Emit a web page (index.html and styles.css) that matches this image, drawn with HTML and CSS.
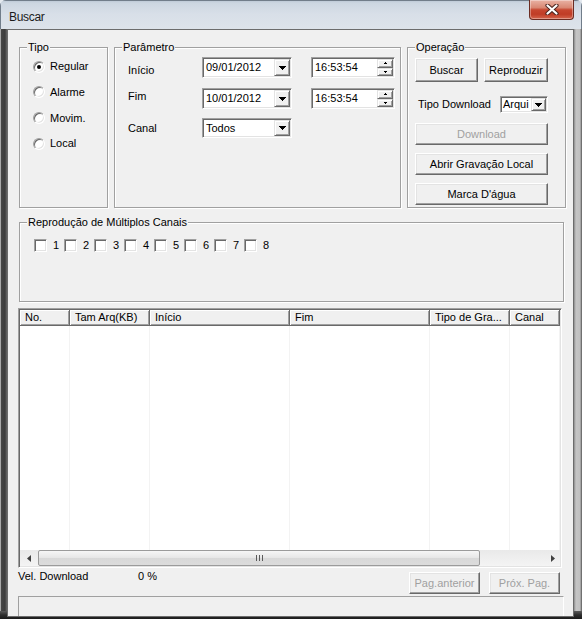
FILE: index.html
```html
<!DOCTYPE html>
<html lang="pt">
<head>
<meta charset="utf-8">
<title>Buscar</title>
<link rel="stylesheet" href="styles.css">
</head>
<body>
<div class="window">
  <div class="titlebar">
    <span class="title">Buscar</span>
    <div class="close">
      <svg width="14" height="11" viewBox="0 0 14 11"><path d="M2.5 1.5L11.5 9.5M11.5 1.5L2.5 9.5" stroke="#4d2620" stroke-width="4.2" stroke-linecap="round"/><path d="M2.5 1.5L11.5 9.5M11.5 1.5L2.5 9.5" stroke="#fff" stroke-width="2.2" stroke-linecap="round"/></svg>
    </div>
  </div>
  <div class="mid">
    <div class="client">
      <div class="top-row">
        <div class="group g-tipo">
          <span class="legend">Tipo</span>
          <div class="radio-row"><span class="radio checked"></span><span>Regular</span></div>
          <div class="radio-row"><span class="radio"></span><span>Alarme</span></div>
          <div class="radio-row"><span class="radio"></span><span>Movim.</span></div>
          <div class="radio-row"><span class="radio"></span><span>Local</span></div>
        </div>
        <div class="group g-param">
          <span class="legend">Parâmetro</span>
          <div class="prow r1">
            <span class="plabel l1">Início</span>
            <div class="combo date"><span class="val">09/01/2012</span><span class="dd"><svg width="7" height="4"><path d="M0 0h7v1h-1v1h-1v1h-1v1h-1v-1h-1v-1h-1v-1h-1z"/></svg></span></div>
            <div class="time"><span class="val">16:53:54</span><span class="spin"><span class="sb"><svg width="3" height="2"><path d="M1 0h1v1h1v1h-3v-1h1z"/></svg></span><span class="sb"><svg width="3" height="2"><path d="M0 0h3v1h-1v1h-1v-1h-1z"/></svg></span></span></div>
          </div>
          <div class="prow r2">
            <span class="plabel l2">Fim</span>
            <div class="combo date"><span class="val">10/01/2012</span><span class="dd"><svg width="7" height="4"><path d="M0 0h7v1h-1v1h-1v1h-1v1h-1v-1h-1v-1h-1v-1h-1z"/></svg></span></div>
            <div class="time"><span class="val">16:53:54</span><span class="spin"><span class="sb"><svg width="3" height="2"><path d="M1 0h1v1h1v1h-3v-1h1z"/></svg></span><span class="sb"><svg width="3" height="2"><path d="M0 0h3v1h-1v1h-1v-1h-1z"/></svg></span></span></div>
          </div>
          <div class="prow r3">
            <span class="plabel">Canal</span>
            <div class="combo date"><span class="val">Todos</span><span class="dd"><svg width="7" height="4"><path d="M0 0h7v1h-1v1h-1v1h-1v1h-1v-1h-1v-1h-1v-1h-1z"/></svg></span></div>
          </div>
        </div>
        <div class="group g-op">
          <span class="legend">Operação</span>
          <div class="op-row1">
            <button class="btn b-buscar">Buscar</button>
            <button class="btn b-repro">Reproduzir</button>
          </div>
          <div class="op-row2">
            <span class="tdl">Tipo Download</span>
            <div class="combo tipo"><span class="val">Arqui</span><span class="dd small"><svg width="7" height="4"><path d="M0 0h7v1h-1v1h-1v1h-1v1h-1v-1h-1v-1h-1v-1h-1z"/></svg></span></div>
          </div>
          <button class="btn wide disabled first">Download</button>
          <button class="btn wide">Abrir Gravação Local</button>
          <button class="btn wide">Marca D'água</button>
        </div>
      </div>

      <div class="group g-multi">
        <span class="legend">Reprodução de Múltiplos Canais</span>
        <div class="cb-item"><span class="checkbox"></span><span>1</span></div>
        <div class="cb-item"><span class="checkbox"></span><span>2</span></div>
        <div class="cb-item"><span class="checkbox"></span><span>3</span></div>
        <div class="cb-item"><span class="checkbox"></span><span>4</span></div>
        <div class="cb-item"><span class="checkbox"></span><span>5</span></div>
        <div class="cb-item"><span class="checkbox"></span><span>6</span></div>
        <div class="cb-item"><span class="checkbox"></span><span>7</span></div>
        <div class="cb-item"><span class="checkbox"></span><span>8</span></div>
      </div>

      <div class="table">
        <div class="thead">
          <div class="th c1">No.</div>
          <div class="th c2">Tam Arq(KB)</div>
          <div class="th c3">Início</div>
          <div class="th c4">Fim</div>
          <div class="th c5">Tipo de Gra...</div>
          <div class="th c6">Canal</div>
        </div>
        <div class="tbody">
          <div class="td c1"></div>
          <div class="td c2"></div>
          <div class="td c3"></div>
          <div class="td c4"></div>
          <div class="td c5"></div>
          <div class="td c6"></div>
        </div>
        <div class="hscroll">
          <span class="sarrow"><svg width="4" height="7"><path d="M4 0V7L0 3.5Z" fill="#404040"/></svg></span>
          <span class="thumb"><svg width="7" height="6"><path d="M0.5 0v6M3.5 0v6M6.5 0v6" stroke="#5a5a5a"/></svg></span>
          <span class="sarrow r"><svg width="4" height="7"><path d="M0 0V7L4 3.5Z" fill="#404040"/></svg></span>
        </div>
      </div>

      <div class="status">
        <span class="vel">Vel. Download</span>
        <span class="pct">0 %</span>
        <div class="pbtns">
          <button class="btn pbtn disabled">Pag.anterior</button>
          <button class="btn pbtn disabled">Próx. Pag.</button>
        </div>
      </div>
      <div class="sbox"></div>
    </div>
  </div>
</div>
</body>
</html>
```

FILE: styles.css
```css
* { box-sizing: border-box; margin: 0; padding: 0; }
html, body { width: 582px; height: 619px; overflow: hidden; }
body {
  background: #e4e9ef;
  font-family: "Liberation Sans", Arial, sans-serif;
  font-size: 11px;
  line-height: 13px;
  color: #000;
}
svg { display: block; }

.window {
  width: 582px;
  height: 619px;
  display: flex;
  flex-direction: column;
  border-radius: 6px 6px 0 0;
  overflow: hidden;
}

.titlebar {
  height: 29px;
  flex: none;
  display: flex;
  align-items: flex-start;
  padding: 0 8px 0 9px;
  background: linear-gradient(to bottom, #b7c4d2 0, #ccd6e1 3px, #d8dfe8 14px, #dde3ea 29px);
  box-shadow: inset 1px 1px 0 #717d8a, inset -1px 0 0 #717d8a;
}
.title {
  font-size: 12px;
  letter-spacing: -0.3px;
  line-height: 16px;
  margin-top: 9px;
  color: #1b1b1b;
}
.close {
  margin-left: auto;
  width: 45px;
  height: 20px;
  border: 1px solid #6b2c22;
  border-top: none;
  border-radius: 0 0 4px 4px;
  background: linear-gradient(to bottom, #e9b2a4 0, #d98873 40%, #c6462f 52%, #c03c26 75%, #d4654d 100%);
  box-shadow: inset 0 0 0 1px rgba(255, 255, 255, .35);
  display: flex;
  align-items: center;
  justify-content: center;
}

.mid {
  flex: 1;
  display: flex;
  padding: 0 8px 8px 7px;
  background:
    linear-gradient(to bottom, transparent 582px, #5b5b5b 582px, #2e2e2e 586px, #1b1b1b 590px),
    linear-gradient(to right, #a9a9a9 0, #a9a9a9 1px, #474747 1px, #3d3d3d 5px, #6a6a6a 7px, #6a6a6a 574px, #8d8d8d 574px, #c5c5c5 576px, #c0c0c0 580px, #555 582px);
}

.client {
  flex: 1;
  background: #f0f0f0;
  border: 1px solid #6c6c6c;
  display: flex;
  flex-direction: column;
  align-items: flex-start;
  padding-left: 10px;
  overflow: hidden;
}
.client > * { flex-shrink: 0; }

/* group boxes */
.group {
  position: relative;
  border: 1px solid #a0a0a0;
  box-shadow: inset 1px 1px 0 #fff, 1px 1px 0 #fff;
  flex: none;
}
.legend {
  position: absolute;
  top: -7px;
  left: 7px;
  padding: 0 1px;
  background: #f0f0f0;
  line-height: 13px;
  white-space: nowrap;
}

.top-row {
  display: flex;
  gap: 6px;
  margin: 17px 0 0 1px;
}
.top-row .group { height: 161px; }

/* Tipo */
.g-tipo { width: 89px; padding: 6px 0 0 13px; }
.radio-row {
  display: flex;
  align-items: center;
  gap: 5px;
  height: 25.67px;
}
.radio {
  position: relative;
  width: 12px;
  height: 12px;
  flex: none;
  border-radius: 50%;
  background: #fff;
  border: 1px solid;
  border-color: #a0a0a0 #fff #fff #a0a0a0;
  box-shadow: inset 1px 1px 0 #696969, inset -1px -1px 0 #e3e3e3;
}
.radio.checked::after {
  content: "";
  position: absolute;
  left: 3px;
  top: 3px;
  width: 4px;
  height: 4px;
  border-radius: 50%;
  background: #000;
}

/* Parametro */
.g-param { width: 287px; padding: 9px 0 0 13px; }
.prow { display: flex; align-items: stretch; }
.r1 { height: 21px; }
.r2 { height: 21px; margin-top: 10px; }
.r3 { height: 20px; margin-top: 9px; }
.plabel { width: 74px; display: flex; align-items: center; }
.l1 { padding-top: 5px; }
.l2 { padding-bottom: 4px; }

.combo, .time {
  display: flex;
  background: #fff;
  border: 1px solid;
  border-color: #a0a0a0 #fff #fff #a0a0a0;
  box-shadow: inset 1px 1px 0 #696969, inset -1px -1px 0 #e3e3e3;
  padding: 1px;
}
.combo.date { width: 90px; }
.time { width: 84px; margin-left: 19px; }
.val {
  flex: 1;
  min-width: 0;
  padding-left: 2px;
  display: flex;
  align-items: center;
  white-space: nowrap;
  overflow: hidden;
}
.dd, .sb {
  flex: none;
  display: flex;
  align-items: center;
  justify-content: center;
  background: #f0f0f0;
  border: 1px solid;
  border-color: #e3e3e3 #696969 #696969 #e3e3e3;
  box-shadow: inset 1px 1px 0 #fff, inset -1px -1px 0 #a0a0a0;
}
.dd { width: 16px; }
.dd.small { width: 15px; }
.spin { width: 16px; display: flex; flex-direction: column; }
.sb { flex: 1; }

/* Operacao */
.g-op {
  width: 159px;
  padding: 10px 0 0 7px;
  display: flex;
  flex-direction: column;
  align-items: flex-start;
}
.btn {
  font: inherit;
  color: #000;
  background: #f0f0f0;
  border: 1px solid;
  border-color: #fff #696969 #696969 #fff;
  box-shadow: inset -1px -1px 0 #a0a0a0, inset 1px 1px 0 #e3e3e3;
  display: flex;
  align-items: center;
  justify-content: center;
  white-space: nowrap;
}
.btn.disabled { color: #a0a0a0; }
.op-row1 { display: flex; gap: 6px; }
.b-buscar { width: 63px; height: 24px; }
.b-repro { width: 64px; height: 24px; }
.op-row2 { display: flex; align-items: center; margin-top: 14px; height: 17px; }
.tdl { width: 85px; padding-left: 3px; white-space: nowrap; }
.combo.tipo { width: 48px; height: 17px; }
.combo.tipo .val { padding-left: 1px; }
.wide { width: 133px; height: 22px; margin-top: 8px; }
.wide.first { margin-top: 10px; }

/* Multi canais */
.g-multi {
  width: 545px;
  height: 80px;
  margin: 14px 0 0 1px;
  padding: 16px 0 0 14px;
  display: flex;
  align-items: flex-start;
}
.cb-item {
  width: 30px;
  height: 13px;
  display: flex;
  align-items: center;
  gap: 6px;
}
.checkbox {
  width: 13px;
  height: 13px;
  flex: none;
  background: #fff;
  border: 1px solid;
  border-color: #a0a0a0 #fff #fff #a0a0a0;
  box-shadow: inset 1px 1px 0 #696969, inset -1px -1px 0 #e3e3e3;
}

/* Table */
.table {
  width: 544px;
  height: 260px;
  margin-top: 6px;
  background: #fff;
  border: 1px solid;
  border-color: #a0a0a0 #fff #fff #a0a0a0;
  box-shadow: inset 1px 1px 0 #696969, inset -1px -1px 0 #e3e3e3;
  padding: 1px;
  display: flex;
  flex-direction: column;
}
.thead { display: flex; height: 16px; flex: none; }
.th {
  height: 16px;
  padding-left: 5px;
  background: #f0f0f0;
  border-right: 1px solid #696969;
  border-bottom: 1px solid #696969;
  box-shadow: inset 1px 1px 0 #fff, inset -1px -1px 0 #a0a0a0;
  line-height: 14px;
  white-space: nowrap;
  overflow: hidden;
  flex: none;
}
.c1 { width: 50px; }
.c2 { width: 80px; }
.c3 { width: 140px; }
.c4 { width: 140px; }
.c5 { width: 80px; }
.c6 { width: 50px; }
.tbody { display: flex; height: 224px; flex: none; }
.td { height: 100%; border-right: 1px solid #f3f3f3; flex: none; }
.hscroll {
  height: 16px;
  flex: none;
  display: flex;
  background: linear-gradient(to bottom, #e9e9e9, #f4f4f4);
}
.sarrow {
  width: 17px;
  display: flex;
  align-items: center;
  justify-content: center;
}
.sarrow.r { margin-left: auto; padding-left: 3px; }
.thumb {
  width: 442px;
  margin-left: 1px;
  border: 1px solid #9b9b9b;
  border-radius: 2px;
  background: linear-gradient(to bottom, #f6f6f6, #e6e6e6 50%, #d8d8d8 51%, #dcdcdc);
  display: flex;
  align-items: center;
  justify-content: center;
}

/* status */
.status {
  align-self: stretch;
  height: 26px;
  display: flex;
  align-items: flex-start;
}
.vel { width: 120px; margin-top: 2px; }
.pct { margin-top: 2px; }
.pbtns {
  margin-left: auto;
  margin-right: 13px;
  margin-top: 4px;
  display: flex;
  gap: 9px;
}
.pbtn { width: 71px; height: 22px; }
.sbox {
  width: 546px;
  height: 20px;
  margin-top: 2px;
  border-top: 1px solid #a0a0a0;
  border-left: 1px solid #a0a0a0;
  border-right: 1px solid #fff;
}
```
